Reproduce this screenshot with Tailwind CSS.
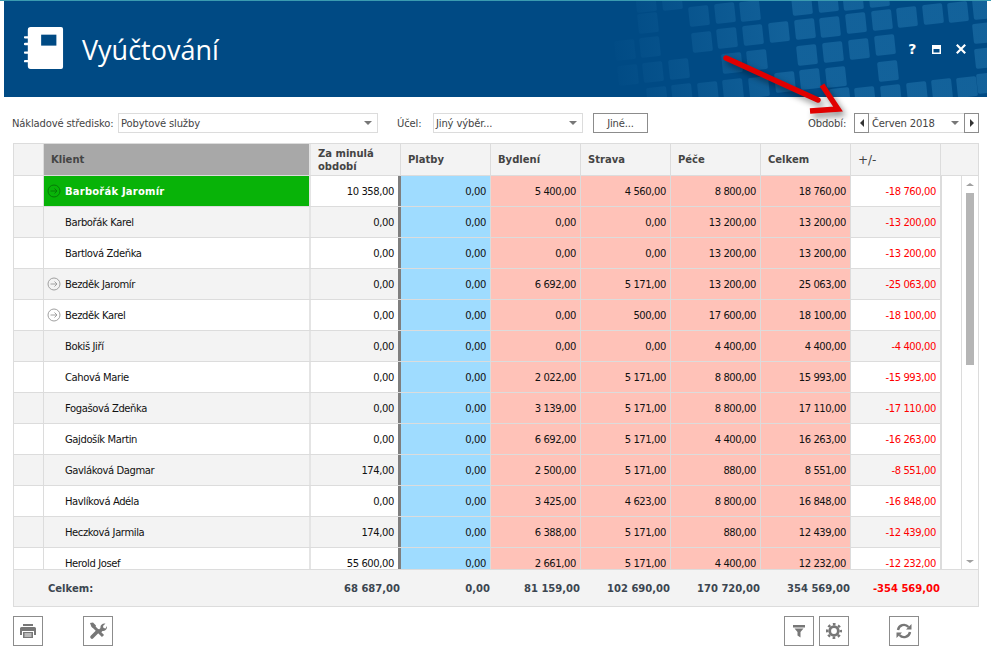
<!DOCTYPE html>
<html lang="cs">
<head>
<meta charset="UTF-8">
<title>Vyúčtování</title>
<script src="https://cdn.jsdelivr.net/npm/@tailwindcss/browser@4"></script>
</head>
<body class="bg-white">
<div class="relative w-[991px] h-[658px] overflow-hidden bg-white text-[10px] tracking-[-0.4px] text-[#222] font-['DejaVu_Sans',sans-serif]">
  <div class="h-px bg-[#3a9bb0]"></div>

  <!-- Header -->
  <header class="relative ml-[4px] w-[983px] h-[96px] bg-[#004a84] overflow-hidden">
    <svg class="absolute left-[-4px] top-[-1px]" width="991" height="97" viewBox="0 0 991 97">
      <defs>
        <linearGradient id="fade" gradientUnits="userSpaceOnUse" x1="605" y1="0" x2="790" y2="0">
          <stop offset="0" stop-color="#1a6ba3" stop-opacity="0"/>
          <stop offset="0.3" stop-color="#1a6ba3" stop-opacity="0.22"/>
          <stop offset="1" stop-color="#1a6ba3" stop-opacity="0.72"/>
        </linearGradient>
      </defs>
      <g fill="url(#fade)">
        <rect x="636" y="-8" width="20" height="20" rx="2" transform="rotate(-6 646 2)"/>
        <rect x="662" y="-10" width="20" height="20" rx="2" transform="rotate(-6 672 0)"/>
        <rect x="689" y="6" width="20" height="20" rx="2" transform="rotate(-6 699 16)"/>
        <rect x="715" y="3" width="20" height="20" rx="2" transform="rotate(-6 725 13)"/>
        <rect x="740" y="1" width="20" height="20" rx="2" transform="rotate(-6 750 11)"/>
        <rect x="792" y="-5" width="20" height="20" rx="2" transform="rotate(-6 802 5)"/>
        <rect x="818" y="-8" width="20" height="20" rx="2" transform="rotate(-6 828 2)"/>
        <rect x="843" y="-10" width="20" height="20" rx="2" transform="rotate(-6 853 0)"/>
        <rect x="869" y="-13" width="20" height="20" rx="2" transform="rotate(-6 879 -3)"/>
        <rect x="638" y="13" width="20" height="20" rx="2" transform="rotate(-6 648 23)"/>
        <rect x="872" y="10" width="20" height="20" rx="2" transform="rotate(-6 882 20)"/>
        <rect x="897" y="7" width="20" height="20" rx="2" transform="rotate(-6 907 17)"/>
        <rect x="923" y="4" width="20" height="20" rx="2" transform="rotate(-6 933 14)"/>
        <rect x="948" y="2" width="20" height="20" rx="2" transform="rotate(-6 958 12)"/>
        <rect x="973" y="-1" width="20" height="20" rx="2" transform="rotate(-6 983 9)"/>
        <rect x="846" y="13" width="20" height="20" rx="2" transform="rotate(-6 856 23)"/>
        <rect x="820" y="17" width="20" height="20" rx="2" transform="rotate(-6 830 27)"/>
        <rect x="795" y="19" width="20" height="20" rx="2" transform="rotate(-6 805 29)"/>
        <rect x="769" y="22" width="20" height="20" rx="2" transform="rotate(-6 779 32)"/>
        <rect x="743" y="25" width="20" height="20" rx="2" transform="rotate(-6 753 35)"/>
        <rect x="717" y="28" width="20" height="20" rx="2" transform="rotate(-6 727 38)"/>
        <rect x="692" y="32" width="20" height="20" rx="2" transform="rotate(-6 702 42)"/>
        <rect x="640" y="37" width="20" height="20" rx="2" transform="rotate(-6 650 47)"/>
        <rect x="615" y="40" width="20" height="20" rx="2" transform="rotate(-6 625 50)"/>
        <rect x="875" y="35" width="20" height="20" rx="2" transform="rotate(-6 885 45)"/>
        <rect x="849" y="39" width="20" height="20" rx="2" transform="rotate(-6 859 49)"/>
        <rect x="823" y="42" width="20" height="20" rx="2" transform="rotate(-6 833 52)"/>
        <rect x="797" y="45" width="20" height="20" rx="2" transform="rotate(-6 807 55)"/>
        <rect x="747" y="50" width="20" height="20" rx="2" transform="rotate(-6 757 60)"/>
        <rect x="722" y="53" width="20" height="20" rx="2" transform="rotate(-6 732 63)"/>
        <rect x="973" y="23" width="20" height="20" rx="2" transform="rotate(-6 983 33)"/>
        <rect x="975" y="48" width="20" height="20" rx="2" transform="rotate(-6 985 58)"/>
        <rect x="977" y="73" width="20" height="20" rx="2" transform="rotate(-6 987 83)"/>
        <rect x="669" y="59" width="20" height="20" rx="2" transform="rotate(-6 679 69)"/>
        <rect x="643" y="62" width="20" height="20" rx="2" transform="rotate(-6 653 72)"/>
        <rect x="618" y="65" width="20" height="20" rx="2" transform="rotate(-6 628 75)"/>
        <rect x="878" y="61" width="20" height="20" rx="2" transform="rotate(-6 888 71)"/>
        <rect x="826" y="67" width="20" height="20" rx="2" transform="rotate(-6 836 77)"/>
        <rect x="800" y="69" width="20" height="20" rx="2" transform="rotate(-6 810 79)"/>
        <rect x="775" y="72" width="20" height="20" rx="2" transform="rotate(-6 785 82)"/>
        <rect x="647" y="87" width="20" height="20" rx="2" transform="rotate(-6 657 97)"/>
        <rect x="672" y="84" width="20" height="20" rx="2" transform="rotate(-6 682 94)"/>
        <rect x="698" y="82" width="20" height="20" rx="2" transform="rotate(-6 708 92)"/>
        <rect x="723" y="79" width="20" height="20" rx="2" transform="rotate(-6 733 89)"/>
        <rect x="749" y="77" width="20" height="20" rx="2" transform="rotate(-6 759 87)"/>
        <rect x="957" y="77" width="20" height="20" rx="2" transform="rotate(-6 967 87)"/>
        <rect x="932" y="79" width="20" height="20" rx="2" transform="rotate(-6 942 89)"/>
        <rect x="907" y="82" width="20" height="20" rx="2" transform="rotate(-6 917 92)"/>
        <rect x="881" y="85" width="20" height="20" rx="2" transform="rotate(-6 891 95)"/>
        <rect x="855" y="87" width="20" height="20" rx="2" transform="rotate(-6 865 97)"/>
        <rect x="830" y="88" width="20" height="20" rx="2" transform="rotate(-6 840 98)"/>
      </g>
    </svg>
    <div class="relative flex items-center h-full pl-[20px] pb-[2px]">
      <svg width="40" height="42" viewBox="0 0 42 44" class="shrink-0">
        <path fill="#fff" d="M4 3a3 3 0 0 1 3-3h32a2 2 0 0 1 2 2v40a2 2 0 0 1-2 2H7a3 3 0 0 1-3-3v-4H1a1 1 0 0 1 0-2.400h3v-6.600H1a1 1 0 0 1 0-2.400h3v-6.600H1a1 1 0 0 1 0-2.400h3V12H1a1 1 0 0 1 0-2.400h3z"/>
        <rect x="18" y="8" width="16" height="11.500" fill="#004a84"/>
      </svg>
      <h1 class="ml-[18px] mt-[2px] text-[27px] tracking-normal leading-none text-white font-['Open_Sans',sans-serif]">Vyúčtování</h1>
      <div class="ml-auto mr-[21px] mt-[2px] flex items-center text-white">
        <span class="w-[8px] text-center text-[14px] leading-none font-bold">?</span>
        <svg width="9" height="9" viewBox="0 0 9 9" class="ml-[16px]"><path fill="#fff" d="M0 0h9v9H0z"/><path fill="#004a84" d="M1.500 4h6v3.500h-6z"/></svg>
        <svg width="10" height="10" viewBox="0 0 10 10" class="ml-[15px]"><path stroke="#fff" stroke-width="2.200" d="M.8.800l8.400 8.400M9.200.800L.8 9.200"/></svg>
      </div>
    </div>
  </header>

  <!-- Filters -->
  <div class="flex items-center h-[20px] mt-[16px] ml-[12px] text-[#444] tracking-[-0.15px]">
    <span class="w-[106px]">Nákladové středisko:</span>
    <div class="flex items-center justify-between w-[260px] h-[20px] border border-[#dcdcdc] pl-[2px] pr-[5px]">
      <span>Pobytové služby</span>
      <span class="border-x-[4px] border-t-[4px] border-x-transparent border-t-[#777]"></span>
    </div>
    <span class="ml-[19px] w-[36px]">Účel:</span>
    <div class="flex items-center justify-between w-[150px] h-[20px] border border-[#dcdcdc] pl-[2px] pr-[5px]">
      <span>Jiný výběr...</span>
      <span class="border-x-[4px] border-t-[4px] border-x-transparent border-t-[#777]"></span>
    </div>
    <button class="ml-[10px] w-[55px] h-[20px] border border-[#8c8c8c] text-center">Jiné...</button>
    <span class="ml-[160px] w-[46px]">Období:</span>
    <button class="flex items-center justify-center w-[15px] h-[20px] border border-[#8c8c8c]"><span class="border-y-[4px] border-r-[4px] border-y-transparent border-r-[#333]"></span></button>
    <div class="flex items-center justify-between w-[95px] h-[20px] border-y border-[#dcdcdc] pl-[3px] pr-[5px]">
      <span>Červen 2018</span>
      <span class="border-x-[4px] border-t-[4px] border-x-transparent border-t-[#777]"></span>
    </div>
    <button class="flex items-center justify-center w-[15px] h-[20px] border border-[#8c8c8c]"><span class="border-y-[4px] border-l-[4px] border-y-transparent border-l-[#333]"></span></button>
  </div>

  <!-- Grid -->
  <div class="mt-[10px] ml-[13px] w-[966px] h-[464px] border border-[#dcdcdc] flex flex-col">
    <div class="flex h-[32px] shrink-0 border-b border-[#dcdcdc] bg-[#f3f3f3] tracking-normal font-bold text-[#444]">
      <div class="w-[30px] border-r border-[#dcdcdc]"></div>
      <div class="w-[267px] flex items-center pl-[7px] bg-[#a8a8a8] border-r-2 border-[#e4e4e4]">Klient</div>
      <div class="w-[90px] flex items-center pl-[7px] leading-[13px] border-r border-[#dcdcdc]">Za minulá<br>období</div>
      <div class="w-[90px] flex items-center pl-[7px] border-r border-[#dcdcdc]">Platby</div>
      <div class="w-[90px] flex items-center pl-[7px] border-r border-[#dcdcdc]">Bydlení</div>
      <div class="w-[90px] flex items-center pl-[7px] border-r border-[#dcdcdc]">Strava</div>
      <div class="w-[90px] flex items-center pl-[7px] border-r border-[#dcdcdc]">Péče</div>
      <div class="w-[90px] flex items-center pl-[7px] border-r border-[#dcdcdc]">Celkem</div>
      <div class="w-[90px] flex items-center pl-[7px] border-r border-[#dcdcdc] font-normal text-[12px]">+/-</div>
      <div class="w-[37px]"></div>
    </div>
    <div class="flex h-[393px] shrink-0 overflow-hidden">
      <div id="rows" class="w-[927px] shrink-0"></div>
      <div class="w-[21px] shrink-0 border-l border-r border-[#dcdcdc]"></div>
      <div class="flex-1 flex flex-col items-center pt-[7px] pb-[6px]">
        <span class="border-x-[4px] border-b-[3px] border-x-transparent border-b-[#a0a0a0]"></span>
        <div class="mt-[7px] w-[8px] h-[172px] bg-[#b5b5b5]"></div>
        <span class="mt-auto border-x-[4px] border-t-[3px] border-x-transparent border-t-[#a0a0a0]"></span>
      </div>
    </div>
    <div class="flex flex-1 items-center border-t border-[#dcdcdc] bg-[#f3f3f3] tracking-normal font-bold text-[#3c4650]">
      <div class="w-[296px] pl-[34px]">Celkem:</div>
      <div class="w-[90px] text-right">68 687,00</div>
      <div class="w-[90px] text-right">0,00</div>
      <div class="w-[90px] text-right">81 159,00</div>
      <div class="w-[90px] text-right">102 690,00</div>
      <div class="w-[90px] text-right">170 720,00</div>
      <div class="w-[90px] text-right">354 569,00</div>
      <div class="w-[90px] text-right text-[#ff0000]">-354 569,00</div>
    </div>
  </div>

  <!-- Bottom toolbar -->
  <div class="flex mt-[9px] ml-[13px]">
    <button class="flex items-center justify-center w-[30px] h-[30px] border border-[#8c8c8c]">
      <svg width="16" height="16" viewBox="0 0 16 16"><path fill="#777" fill-rule="evenodd" d="M3 1h10v2H3zM1.500 4h13A1.500 1.500 0 0 1 16 5.500V12h-2V8H2v4H0V5.500A1.500 1.500 0 0 1 1.500 4zM3 9h10v6H3zm1.500 1.500v1h7v-1zm0 2v1h7v-1z"/></svg>
    </button>
    <button class="ml-[40px] flex items-center justify-center w-[30px] h-[30px] border border-[#8c8c8c]">
      <svg width="18" height="18" viewBox="0 0 18 18"><path stroke="#777" stroke-width="3.600" stroke-linecap="round" d="M3 15l6-6"/><path stroke="#777" stroke-width="3" d="M4 4l10 10"/><path fill="#777" d="M1 1l3-.500 3 3-1.500 3-3-1.500zM9 8.500l2.500-2.500c-.500-2.500 1.500-5 5-4.500L14 4l.5 2 2 .5 1.500-2.500c.500 3-2 5.500-4.500 5L11 11.500z"/></svg>
    </button>
    <button class="ml-[671px] flex items-center justify-center w-[30px] h-[30px] border border-[#8c8c8c]">
      <svg width="14" height="14" viewBox="0 0 14 14"><path fill="#777" d="M1 1h12v2.500H1zM2.500 4.500h9L8.500 8v5.500l-3-2V8z"/></svg>
    </button>
    <button class="ml-[5px] flex items-center justify-center w-[30px] h-[30px] border border-[#8c8c8c]">
      <svg width="16" height="16" viewBox="0 0 16 16"><circle cx="8" cy="8" r="4.300" fill="none" stroke="#777" stroke-width="2.800"/><circle cx="8" cy="8" r="6.800" fill="none" stroke="#777" stroke-width="2.400" stroke-dasharray="2.700 2.640" stroke-dashoffset="1.350"/></svg>
    </button>
    <button class="ml-[40px] flex items-center justify-center w-[30px] h-[30px] border border-[#8c8c8c]">
      <svg width="16" height="16" viewBox="0 0 16 16"><path fill="none" stroke="#777" stroke-width="2.400" d="M2 7a6 6 0 0 1 10.500-3M14 9a6 6 0 0 1-10.500 3"/><path fill="#777" d="M15.500 1v5.500H10zM.5 15V9.500H6z"/></svg>
    </button>
  </div>

  <!-- Annotation arrow drawn over the window -->
  <svg class="absolute left-0 top-0 pointer-events-none drop-shadow-[3px_4px_3px_rgba(0,0,0,0.45)]" width="991" height="130" viewBox="0 0 991 130">
    <path fill="none" stroke="#e00000" stroke-width="5.500" stroke-linecap="round" d="M726 58L818 100"/>
    <path fill="none" stroke="#e00000" stroke-width="5.500" stroke-linejoin="miter" d="M822 85L838 109L810 111"/>
  </svg>
</div>

<script>
  var clients = [
    ["Barbořák Jaromír", "10 358,00", "5 400,00", "4 560,00", "8 800,00", "18 760,00", "-18 760,00", 1],
    ["Barbořák Karel", "0,00", "0,00", "0,00", "13 200,00", "13 200,00", "-13 200,00", 0],
    ["Bartlová Zdeňka", "0,00", "0,00", "0,00", "13 200,00", "13 200,00", "-13 200,00", 0],
    ["Bezděk Jaromír", "0,00", "6 692,00", "5 171,00", "13 200,00", "25 063,00", "-25 063,00", 1],
    ["Bezděk Karel", "0,00", "0,00", "500,00", "17 600,00", "18 100,00", "-18 100,00", 1],
    ["Bokiš Jiří", "0,00", "0,00", "0,00", "4 400,00", "4 400,00", "-4 400,00", 0],
    ["Cahová Marie", "0,00", "2 022,00", "5 171,00", "8 800,00", "15 993,00", "-15 993,00", 0],
    ["Fogašová Zdeňka", "0,00", "3 139,00", "5 171,00", "8 800,00", "17 110,00", "-17 110,00", 0],
    ["Gajdošík Martin", "0,00", "6 692,00", "5 171,00", "4 400,00", "16 263,00", "-16 263,00", 0],
    ["Gavláková Dagmar", "174,00", "2 500,00", "5 171,00", "880,00", "8 551,00", "-8 551,00", 0],
    ["Havlíková Adéla", "0,00", "3 425,00", "4 623,00", "8 800,00", "16 848,00", "-16 848,00", 0],
    ["Heczková Jarmila", "174,00", "6 388,00", "5 171,00", "880,00", "12 439,00", "-12 439,00", 0],
    ["Herold Josef", "55 600,00", "2 661,00", "5 171,00", "4 400,00", "12 232,00", "-12 232,00", 0]
  ];

  function circleIcon(color) {
    return '<svg width="14" height="14" viewBox="0 0 14 14" class="absolute left-[3px] top-[8px]"><circle cx="7" cy="7" r="6" fill="none" stroke="' + color + '"/><path fill="none" stroke="' + color + '" d="M3.500 7h6.500M7.500 4.500L10 7l-2.500 2.500"/></svg>';
  }

  var numCell = "w-[90px] h-full flex items-center justify-end pr-[4px] border-[#dcdcdc] ";
  var html = "";
  clients.forEach(function (c, i) {
    var bg = i % 2 ? "bg-[#f3f3f3]" : "bg-white";
    var selected = i === 0;
    var nameCls = selected ? "bg-[#08b308] text-white font-bold tracking-[0.2px]" : bg;
    html += '<div class="flex h-[31px] border-b border-[#dcdcdc] text-[#111]">'
      + '<div class="w-[30px] h-full border-r border-[#dcdcdc] ' + bg + '"></div>'
      + '<div class="relative w-[267px] h-full flex items-center pl-[21px] border-r-2 border-[#e4e4e4] ' + nameCls + '">'
      + (c[7] ? circleIcon(selected ? "#067a06" : "#a0a0a0") : "") + c[0] + '</div>'
      + '<div class="w-[90px] h-full flex items-center justify-end pr-[4px] border-r-[3px] border-[#7f7f7f] ' + bg + '">' + c[1] + '</div>'
      + '<div class="' + numCell + 'bg-[#9fdcff] border-r">0,00</div>'
      + '<div class="' + numCell + 'bg-[#ffc2b8] border-r">' + c[2] + '</div>'
      + '<div class="' + numCell + 'bg-[#ffc2b8] border-r">' + c[3] + '</div>'
      + '<div class="' + numCell + 'bg-[#ffc2b8] border-r">' + c[4] + '</div>'
      + '<div class="' + numCell + 'bg-[#ffc2b8] border-r">' + c[5] + '</div>'
      + '<div class="' + numCell + 'text-[#ff0000] border-r ' + bg + '">' + c[6] + '</div>'
      + '</div>';
  });
  document.getElementById("rows").innerHTML = html;
</script>
</body>
</html>
